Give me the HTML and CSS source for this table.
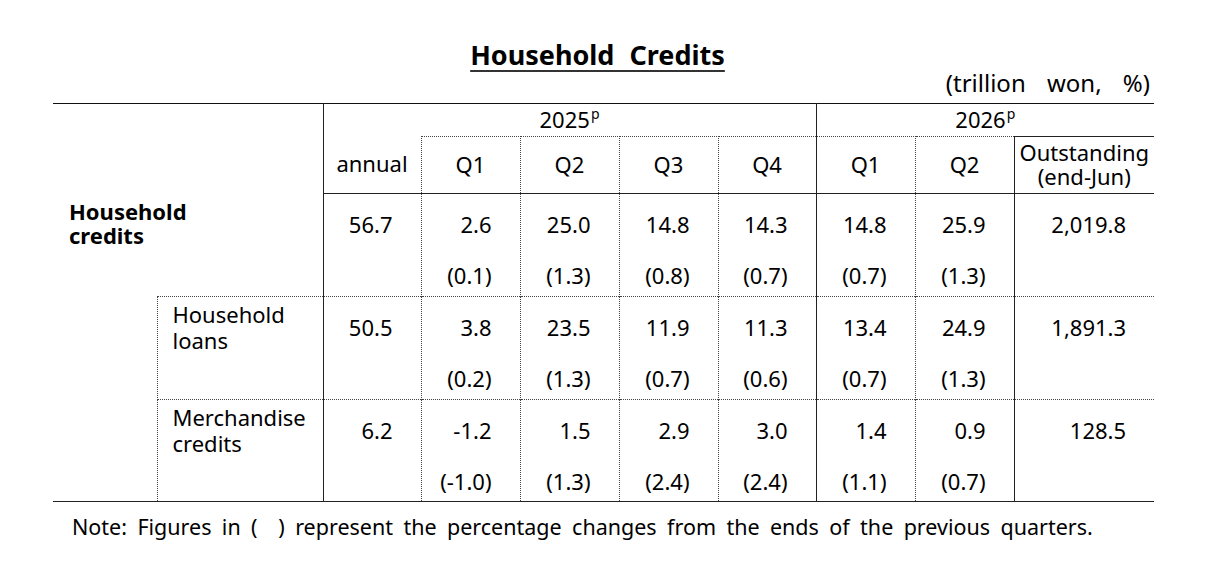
FILE: index.html
```html
<!DOCTYPE html>
<html lang="en">
<head>
<meta charset="utf-8">
<title>Household Credits</title>
<link rel="stylesheet" href="styles.css">
</head>
<body>
<div class="page">
  <h1 class="title"><span class="title-text">Household Credits</span></h1>
  <div class="unit">(trillion won, %)</div>
  <table class="credits">
    <colgroup>
      <col class="c-indent"><col class="c-label"><col class="c-annual">
      <col class="c-q"><col class="c-q"><col class="c-q"><col class="c-q4">
      <col class="c-q"><col class="c-q"><col class="c-out">
    </colgroup>
    <thead>
      <tr class="hrow1">
        <th class="corner" colspan="2" rowspan="2"></th>
        <th class="year y2025" colspan="5">2025<sup>p</sup></th>
        <th class="year y2026" colspan="3">2026<sup>p</sup></th>
      </tr>
      <tr class="hrow2">
        <th class="h annual">annual</th>
        <th class="h q">Q1</th>
        <th class="h q">Q2</th>
        <th class="h q">Q3</th>
        <th class="h q last25">Q4</th>
        <th class="h q">Q1</th>
        <th class="h q last26">Q2</th>
        <th class="h out">Outstanding<br>(end-Jun)</th>
      </tr>
    </thead>
    <tbody>
      <tr class="drow first">
        <th class="label main" colspan="2">Household<br>credits</th>
        <td class="num annual"><div class="v">56.7</div></td>
        <td class="num q"><div class="v">2.6</div><div class="p">(0.1)</div></td>
        <td class="num q"><div class="v">25.0</div><div class="p">(1.3)</div></td>
        <td class="num q"><div class="v">14.8</div><div class="p">(0.8)</div></td>
        <td class="num q last25"><div class="v">14.3</div><div class="p">(0.7)</div></td>
        <td class="num q"><div class="v">14.8</div><div class="p">(0.7)</div></td>
        <td class="num q last26"><div class="v">25.9</div><div class="p">(1.3)</div></td>
        <td class="num out"><div class="v">2,019.8</div></td>
      </tr>
      <tr class="drow sub">
        <td class="indent" rowspan="2"></td>
        <th class="label subl">Household<br>loans</th>
        <td class="num annual"><div class="v">50.5</div></td>
        <td class="num q"><div class="v">3.8</div><div class="p">(0.2)</div></td>
        <td class="num q"><div class="v">23.5</div><div class="p">(1.3)</div></td>
        <td class="num q"><div class="v">11.9</div><div class="p">(0.7)</div></td>
        <td class="num q last25"><div class="v">11.3</div><div class="p">(0.6)</div></td>
        <td class="num q"><div class="v">13.4</div><div class="p">(0.7)</div></td>
        <td class="num q last26"><div class="v">24.9</div><div class="p">(1.3)</div></td>
        <td class="num out"><div class="v">1,891.3</div></td>
      </tr>
      <tr class="drow sub last">
        <th class="label subl">Merchandise<br>credits</th>
        <td class="num annual"><div class="v">6.2</div></td>
        <td class="num q"><div class="v">-1.2</div><div class="p">(-1.0)</div></td>
        <td class="num q"><div class="v">1.5</div><div class="p">(1.3)</div></td>
        <td class="num q"><div class="v">2.9</div><div class="p">(2.4)</div></td>
        <td class="num q last25"><div class="v">3.0</div><div class="p">(2.4)</div></td>
        <td class="num q"><div class="v">1.4</div><div class="p">(1.1)</div></td>
        <td class="num q last26"><div class="v">0.9</div><div class="p">(0.7)</div></td>
        <td class="num out"><div class="v">128.5</div></td>
      </tr>
    </tbody>
  </table>
  <p class="note">Note: Figures in (&nbsp; ) represent the percentage changes from the ends of the previous quarters.</p>
</div>
</body>
</html>
```
FILE: styles.css
```css
html, body {
  margin: 0;
  padding: 0;
  background: #fff;
}

body {
  font-family: "Noto Sans", "Open Sans", sans-serif;
  color: #000;
}

.page {
  width: 1101px;
  margin-left: 53px;
}

.title {
  margin: 39px 0 0;
  padding-right: 12px;
  text-align: center;
  font-size: 27px;
  font-weight: 700;
  line-height: 32px;
  word-spacing: 8px;
}

.title-text {
  text-decoration: underline;
  text-decoration-thickness: 2px;
  text-underline-offset: 5px;
  text-decoration-color: #333;
}

.unit {
  text-align: right;
  padding-right: 4px;
  font-size: 24px;
  line-height: 24px;
  word-spacing: 15px;
}

.credits {
  margin-top: 8px;
  border-collapse: collapse;
  table-layout: fixed;
  width: 1101px;
  font-size: 22px;
  line-height: 26px;
}

.c-indent { width: 104px; }
.c-label { width: 166px; }
.c-annual { width: 98px; }
.c-q { width: 99px; }
.c-q4 { width: 98px; }
.c-out { width: 140px; }

.credits th,
.credits td {
  padding: 0;
  font-weight: 400;
}

/* header */
.hrow1 th {
  height: 30px;
  border-top: 1px solid #111;
  vertical-align: middle;
  text-align: center;
  padding-bottom: 2px;
}

.corner {
  border-right: 1px solid #222;
}

.y2025 {
  border-right: 1px solid #222;
}

.year sup {
  font-size: 14px;
  line-height: 0;
  vertical-align: 9px;
  margin-left: 1px;
}

.credits .hrow2 th {
  height: 53px;
  text-align: center;
  vertical-align: middle;
  border-bottom: 1px solid #222;
  padding-bottom: 3px;
}

.hrow2 .q {
  border-top: 1px dotted #444;
}

.hrow2 .out {
  border-top: 1px solid #222;
  line-height: 24px;
}

.annual,
.q {
  border-right: 1px dotted #444;
}

.credits .last25,
.credits .last26 {
  border-right: 1px solid #222;
}

/* body */
.drow {
  height: 103px;
}

.drow.last {
  height: 102px;
}

.drow > * {
  vertical-align: top;
}

.drow.sub > td:not(.indent),
.drow.sub > th {
  border-top: 1px dotted #444;
}

.drow.last > * {
  border-bottom: 1px solid #222;
}

.indent {
  border-bottom: 1px solid #222;
}

.label {
  text-align: left;
  border-right: 1px solid #222;
}

.credits .label.main {
  font-weight: 700;
  line-height: 24px;
  padding: 5px 0 0 16px;
}

.credits .label.subl {
  border-left: 1px dotted #444;
  line-height: 26px;
  padding: 4px 0 0 15px;
}

.credits td.num {
  text-align: right;
  padding-right: 28px;
}

.num .v {
  padding-top: 17px;
}

.num .p {
  margin-top: 25px;
}

.note {
  margin: 12px 0 0 19px;
  font-size: 21.5px;
  line-height: 26px;
  word-spacing: 4.8px;
}
```
